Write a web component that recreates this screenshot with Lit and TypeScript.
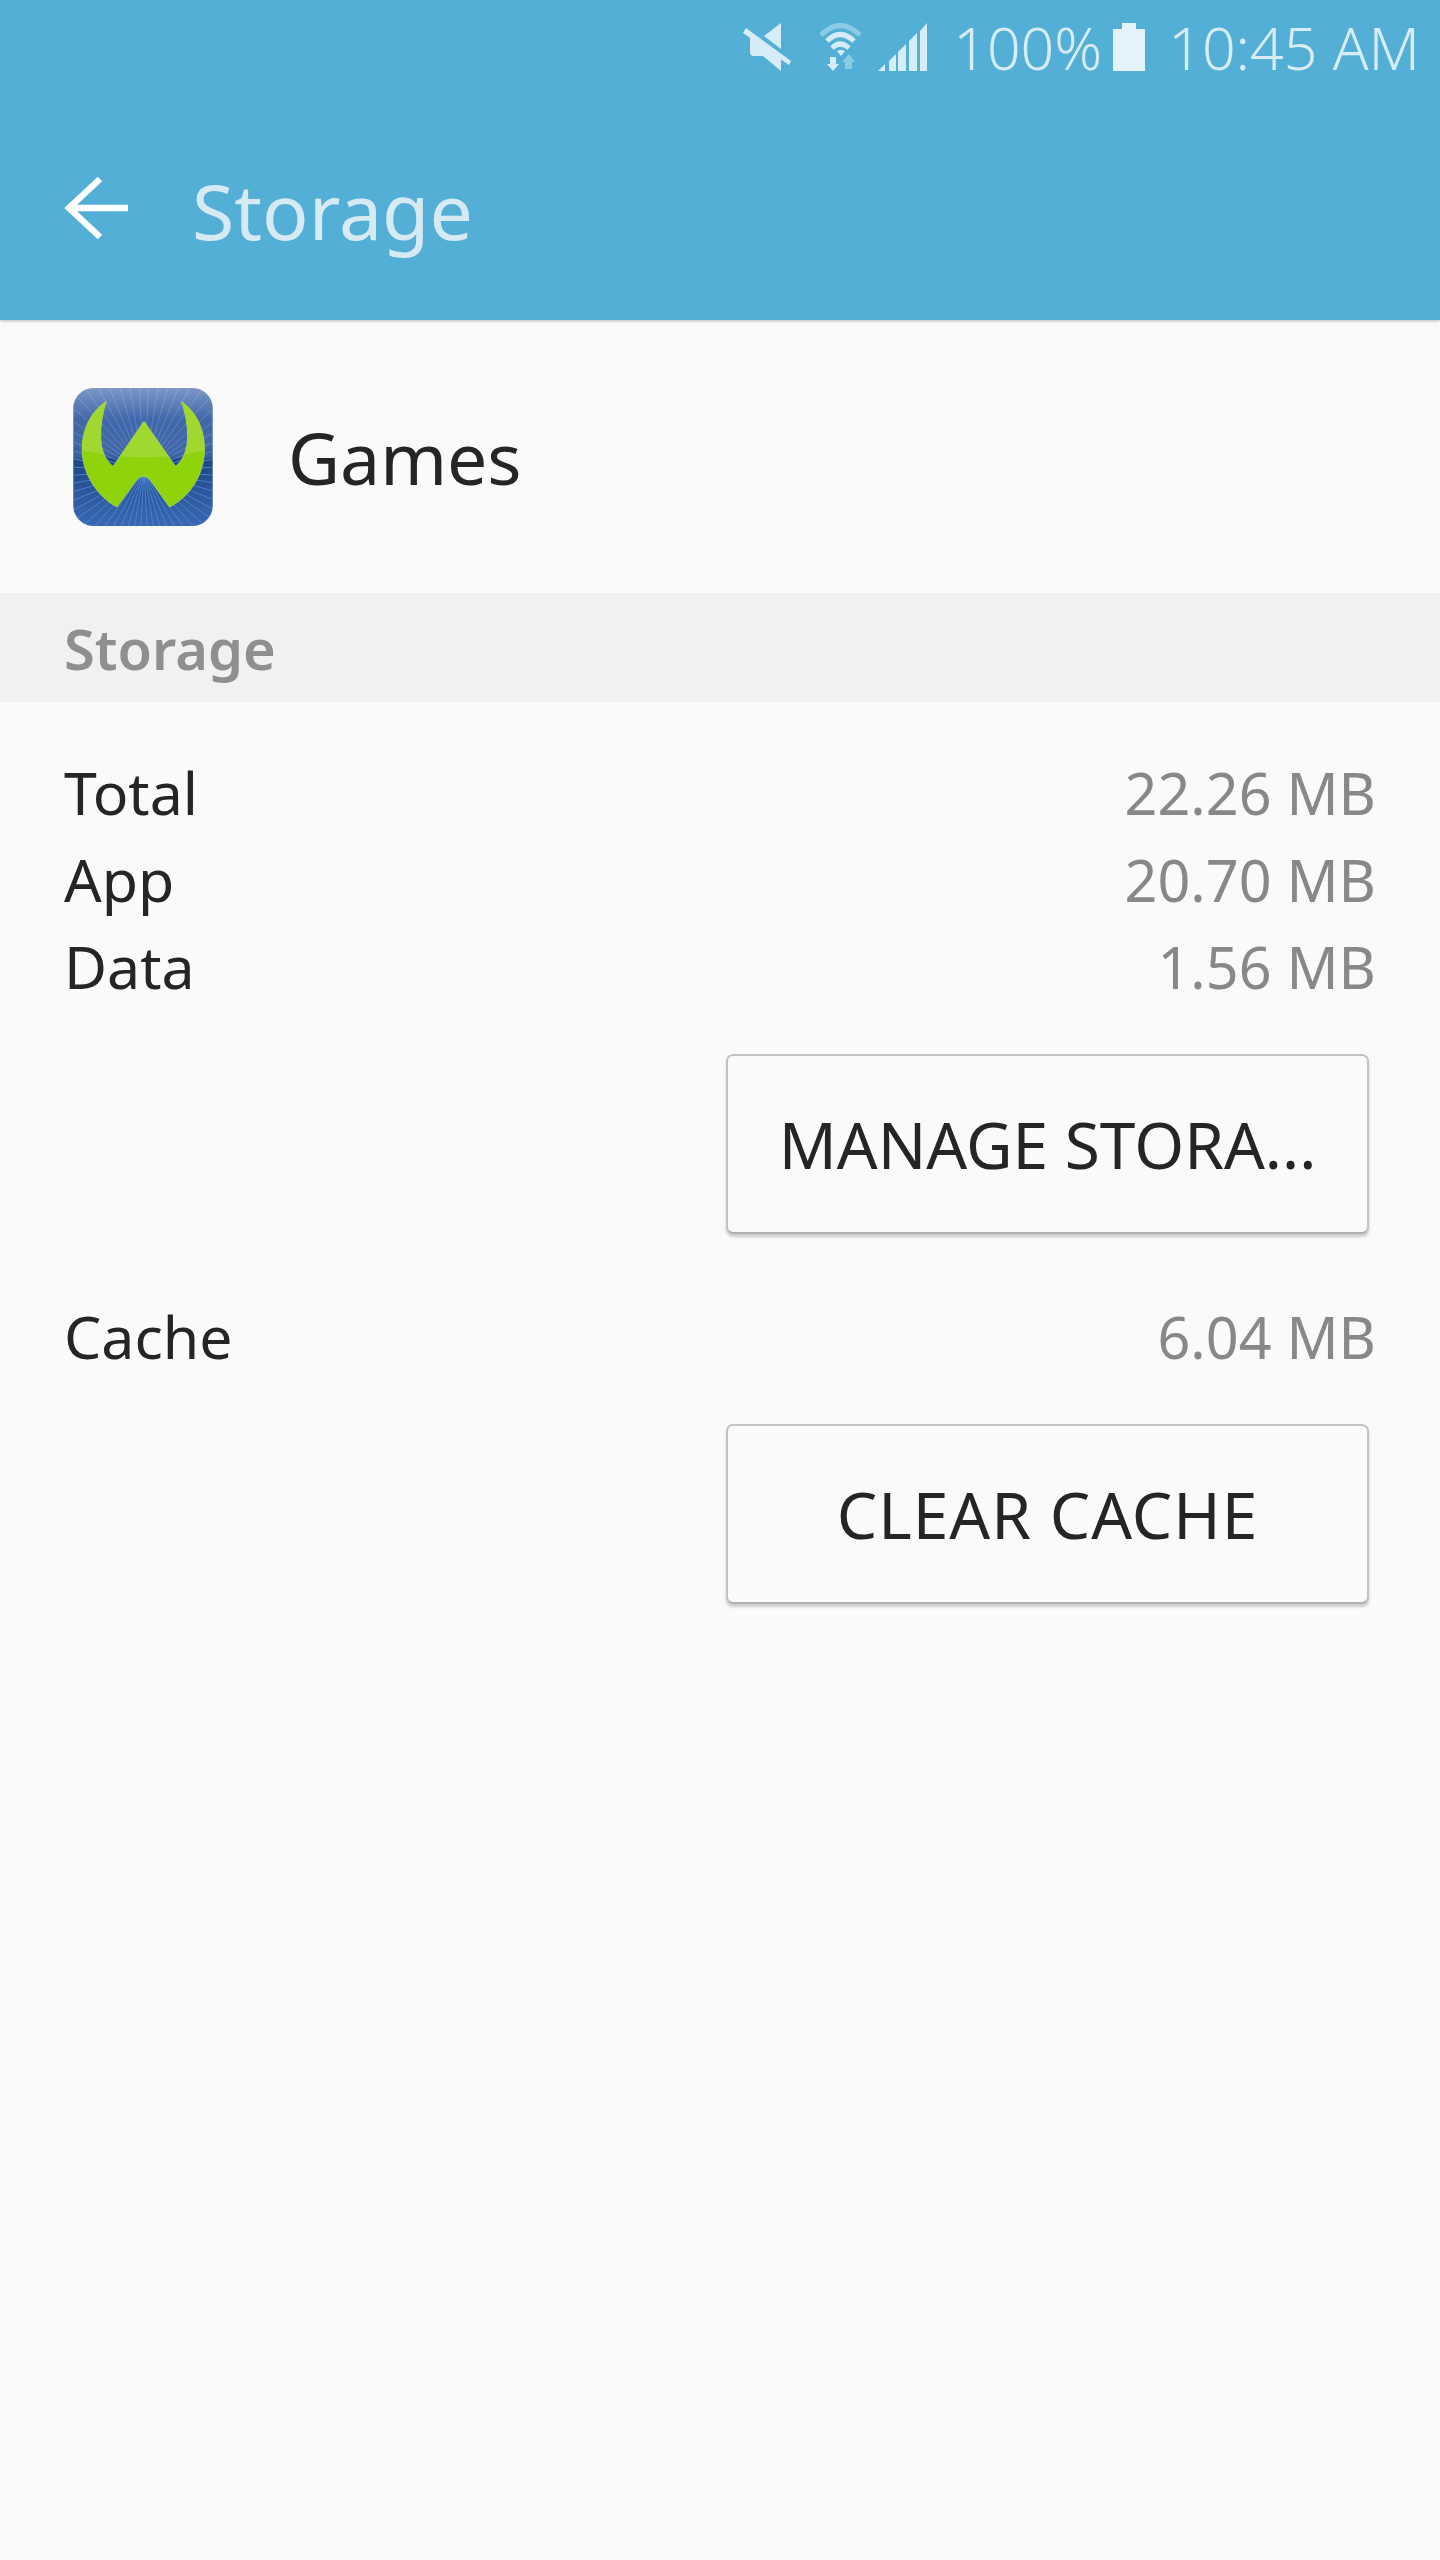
import { LitElement, html, css, svg } from "lit";
import { customElement } from "lit/decorators.js";

const rays = Array.from({ length: 56 }, (_, i) => {
  const a = (i / 56) * Math.PI * 2 + 0.056;
  const x = 283 + Math.cos(a) * 330;
  const y = 300 + Math.sin(a) * 330;
  return svg`<line x1="283" y1="300" x2=${x.toFixed(1)} y2=${y.toFixed(1)} />`;
});

const W =
  "M170 90C118 125 97 180 97 235C97 310 145 378 202 408L260 328Q281 303 302 328L360 408C420 378 465 310 465 235C465 180 445 125 395 90C408 125 414 160 414 195C414 235 402 265 378 286L283 150L190 286C165 265 153 235 153 195C153 160 158 125 170 90Z";

@customElement("app-root")
export class AppRoot extends LitElement {
  static styles = css`
    :host {
      display: block;
      width: 1440px;
      height: 2560px;
      background: #fafafa;
      font-family: "Noto Sans", "Open Sans", sans-serif;
      color: #252525;
      overflow: hidden;
    }
    .appbar {
      height: 320px;
      background: #53afd6;
      box-shadow: 0 1px 3px rgba(0, 0, 0, 0.25);
      position: relative;
    }
    .status {
      height: 96px;
      box-sizing: border-box;
      padding: 23px 20px 0 0;
      display: flex;
      justify-content: flex-end;
      align-items: flex-start;
      color: #d6edf7;
      font-size: 59px;
      font-weight: 300;
    }
    .status svg { display: block; flex: none; }
    .status span { line-height: 48px; white-space: nowrap; }
    .mute { width: 48px; height: 48px; margin-right: 29px; }
    .wifi { width: 41px; height: 48px; margin-right: 17px; }
    .signal { width: 50px; height: 48px; margin-right: 25px; }
    .pct { margin-right: 11px; }
    .batt { width: 32px; height: 48px; margin-right: 23px; }
    .toolbar {
      height: 224px;
      box-sizing: border-box;
      padding: 0 0 0 64px;
      display: flex;
      align-items: center;
    }
    .back { width: 66px; height: 66px; margin-right: 62px; display: block; flex: none; }
    .title { font-size: 77px; color: #d6eaf4; font-weight: 400; line-height: 1; margin-top: 4px; }
    .apphead {
      height: 273px;
      box-sizing: border-box;
      padding-left: 73px;
      display: flex;
      align-items: center;
    }
    .appicon { width: 140px; height: 138px; margin-right: 75px; display: block; flex: none; }
    .appname { font-size: 71.5px; line-height: 1; margin-top: 2px; }
    .section {
      height: 109px;
      background: #f1f1f1;
      padding-left: 64px;
      display: flex;
      align-items: center;
      font-size: 56px;
      font-weight: 600;
      color: #8f8f8f;
    }
    .body { padding: 47px 64px 0; }
    .row {
      height: 87px;
      display: flex;
      justify-content: space-between;
      align-items: baseline;
      font-size: 59px;
      line-height: 87px;
    }
    .row .v { color: #888888; font-size: 57.5px; }
    .actions { display: flex; justify-content: flex-end; margin-right: 7px; }
    .btn {
      width: 643px;
      height: 180px;
      box-sizing: border-box;
      border: 2px solid #c2c2c2;
      border-bottom-color: #b0b0b0;
      border-radius: 7px;
      background: #fafafa;
      box-shadow: 0 3px 3px rgba(0, 0, 0, 0.18);
      display: flex;
      align-items: center;
      justify-content: center;
      font-size: 64px;
      white-space: nowrap;
      color: #252525;
    }
    .wide { letter-spacing: 1px; }
    .mt1 { margin-top: 44px; }
    .cache { margin-top: 59px; }
    .mt2 { margin-top: 44px; }
  `;

  render() {
    return html`
      <div class="appbar">
        <div class="status">
          <svg class="mute" viewBox="0 0 48 48" fill="#d6edf7">
            <path d="M38 0V26L21 13Z" />
            <path d="M7 14V29Q7 33 11 33H20L38 48V34Z" />
            <path d="M3 5L48 38L46 42L0 10Z" />
          </svg>
          <svg class="wifi" viewBox="0 0 41 48">
            <path d="M1 12Q20 -7 40 12" fill="none" stroke="#8ccbe6" stroke-width="5" />
            <path d="M7 18Q20 5 34 18" fill="none" stroke="#d6edf7" stroke-width="5" />
            <path d="M12 25Q20 17 29 25" fill="none" stroke="#d6edf7" stroke-width="5" />
            <path d="M17 28Q21 26 25 28L21 33Z" fill="#d6edf7" />
            <path d="M10 34H16V41H19L13 48L7 41H10Z" fill="#d6edf7" />
            <path d="M25 46V39H22L29 31L35 39H32V46Z" fill="#8ccbe6" />
          </svg>
          <svg class="signal" viewBox="0 0 50 48" fill="#d6edf7">
            <path d="M0 48L7 41V48Z" />
            <path d="M11 48V38L18 31V48Z" />
            <path d="M20 48V29L28 21V48Z" />
            <path d="M31 48V18L39 10V48Z" />
            <path d="M42 48V8L49 0V48Z" />
          </svg>
          <span class="pct">100%</span>
          <svg class="batt" viewBox="0 0 32 48" fill="#e4f3f9">
            <path d="M9 0H23V6H32V48H0V6H9Z" />
          </svg>
          <span>10:45 AM</span>
        </div>
        <div class="toolbar">
          <svg class="back" viewBox="0 0 66 66" fill="none" stroke="#fbfdfe" stroke-width="6.5">
            <path d="M5 33H64" />
            <path d="M36 4L5 33L36 62" />
          </svg>
          <div class="title">Storage</div>
        </div>
      </div>
      <div class="apphead">
        <svg class="appicon" viewBox="70 50 420 415">
          <defs>
            <linearGradient id="bg" x1="0" y1="0" x2="0" y2="1">
              <stop offset="0" stop-color="#3f66aa" />
              <stop offset="0.5" stop-color="#3a5f9f" />
              <stop offset="0.52" stop-color="#1f4685" />
              <stop offset="1" stop-color="#3a69b2" />
            </linearGradient>
            <linearGradient id="gloss" x1="0" y1="0" x2="0" y2="1">
              <stop offset="0" stop-color="#fff" stop-opacity="0.32" />
              <stop offset="0.45" stop-color="#fff" stop-opacity="0.03" />
              <stop offset="1" stop-color="#fff" stop-opacity="0.05" />
            </linearGradient>
            <clipPath id="clip"><rect x="70" y="50" width="420" height="415" rx="62" /></clipPath>
            <clipPath id="wclip"><path d=${W} /></clipPath>
          </defs>
          <g clip-path="url(#clip)">
            <rect x="70" y="50" width="420" height="415" fill="url(#bg)" />
            <g stroke="#4f86d8" stroke-width="3" stroke-opacity="0.85">${rays}</g>
            <path d="M70 50H490V225Q283 290 70 225Z" fill="url(#gloss)" />
          </g>
          <path d=${W} fill="#8fd40b" stroke="#b6e05a" stroke-width="2" />
          <g clip-path="url(#wclip)">
            <path d="M70 50H490V232Q283 285 70 232Z" fill="#a0d830" />
          </g>
        </svg>
        <div class="appname">Games</div>
      </div>
      <div class="section">Storage</div>
      <div class="body">
        <div class="row"><span>Total</span><span class="v">22.26 MB</span></div>
        <div class="row"><span>App</span><span class="v">20.70 MB</span></div>
        <div class="row"><span>Data</span><span class="v">1.56 MB</span></div>
        <div class="actions mt1"><div class="btn">MANAGE STORA...</div></div>
        <div class="row cache"><span>Cache</span><span class="v">6.04 MB</span></div>
        <div class="actions mt2"><div class="btn wide">CLEAR CACHE</div></div>
      </div>
    `;
  }
}
